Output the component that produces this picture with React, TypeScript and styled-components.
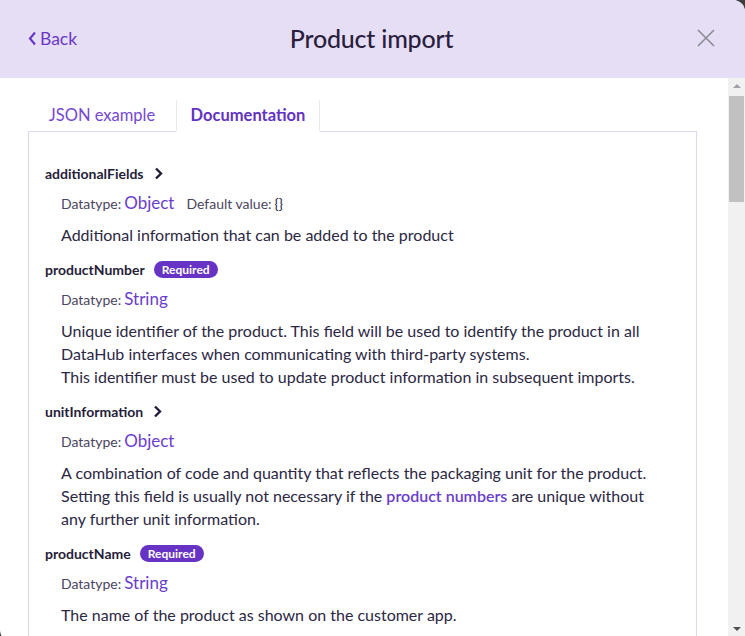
import * as React from 'react';
import styled, { createGlobalStyle } from 'styled-components';

const GlobalStyle = createGlobalStyle`
  html, body {
    margin: 0;
    padding: 0;
    background: #3d3d3f;
    overflow: hidden;
  }
  * {
    box-sizing: border-box;
  }
`

const Link = styled.span`
  color: #6a3dcd;
  font-weight: 600;
`

type Field = {
  name: string;
  required?: boolean;
  expandable?: boolean;
  datatype: string;
  defaultValue?: string;
  description: React.ReactNode[];
};

const fields: Field[] = [
  {
    name: 'additionalFields',
    expandable: true,
    datatype: 'Object',
    defaultValue: '{}',
    description: ['Additional information that can be added to the product']
  },
  {
    name: 'productNumber',
    required: true,
    datatype: 'String',
    description: [
      'Unique identifier of the product. This field will be used to identify the product in all',
      'DataHub interfaces when communicating with third-party systems.',
      'This identifier must be used to update product information in subsequent imports.'
    ]
  },
  {
    name: 'unitInformation',
    expandable: true,
    datatype: 'Object',
    description: [
      'A combination of code and quantity that reflects the packaging unit for the product.',
      <>Setting this field is usually not necessary if the <Link>product numbers</Link> are unique without</>,
      'any further unit information.'
    ]
  },
  {
    name: 'productName',
    required: true,
    datatype: 'String',
    description: ['The name of the product as shown on the customer app.']
  }
]

const ChevronRight = () => (
  <svg width="9" height="13" viewBox="0 0 9 13">
    <polyline points="2,1.5 7,6.5 2,11.5" fill="none" stroke="#241c3a" strokeWidth="2.4" />
  </svg>
)

const ChevronLeft = () => (
  <svg width="9" height="15" viewBox="0 0 9 15">
    <polyline points="7,1.5 2,7.5 7,13.5" fill="none" stroke="#6a38c6" strokeWidth="2.2" />
  </svg>
)

const CloseIcon = () => (
  <svg width="18" height="18" viewBox="0 0 18 18">
    <path d="M1 1 L17 17 M17 1 L1 17" stroke="#8c8a92" strokeWidth="1.6" fill="none" />
  </svg>
)

export default function App() {
  const [tab, setTab] = React.useState('docs')

  return (
    <>
      <GlobalStyle />
      <Modal>
        <Header>
          <BackButton>
            <ChevronLeft />
            Back
          </BackButton>
          <Title>Product import</Title>
          <CloseButton>
            <CloseIcon />
          </CloseButton>
        </Header>
        <Body>
          <ScrollArea>
            <TabRow>
              <Tab $active={tab === 'json'} onClick={() => setTab('json')} $width={148}>JSON example</Tab>
              <Tab $active={tab === 'docs'} onClick={() => setTab('docs')} $width={144}>Documentation</Tab>
              <TabFiller />
            </TabRow>
            <Panel>
              {fields.map((f) => (
                <FieldBlock key={f.name}>
                  <FieldName>
                    {f.name}
                    {f.expandable && <Expand><ChevronRight /></Expand>}
                    {f.required && <Badge>Required</Badge>}
                  </FieldName>
                  <Meta>
                    <MetaLabel>Datatype:</MetaLabel>
                    <MetaValue>{f.datatype}</MetaValue>
                    {f.defaultValue && (
                      <>
                        <MetaLabel $spaced>Default value:</MetaLabel>
                        <DefaultValue>{f.defaultValue}</DefaultValue>
                      </>
                    )}
                  </Meta>
                  <Description>
                    {f.description.map((line, i) => (
                      <Line key={i}>{line}</Line>
                    ))}
                  </Description>
                </FieldBlock>
              ))}
            </Panel>
          </ScrollArea>
          <Scrollbar>
            <ArrowUp />
            <Thumb />
            <TrackSpace />
            <ArrowDown />
          </Scrollbar>
        </Body>
      </Modal>
    </>
  )
}

const Modal = styled.div`
  width: 745px;
  height: 642px;
  background: #ffffff;
  border-radius: 0 12px 0 12px;
  overflow: hidden;
  display: flex;
  flex-direction: column;
  font-family: Lato, "Noto Sans", sans-serif;
`

const Header = styled.div`
  height: 78px;
  flex-shrink: 0;
  background: #e6def5;
  display: grid;
  grid-template-columns: 1fr auto 1fr;
  align-items: center;
  padding: 0 30px 0 28px;
`

const BackButton = styled.div`
  display: flex;
  align-items: center;
  gap: 3px;
  color: #6a38c6;
  font-size: 17.5px;
  cursor: pointer;
  margin-top: -2px;
`

const Title = styled.h1`
  margin: 0;
  font-size: 25px;
  font-weight: 500;
  color: #2a1e3e;
  letter-spacing: -0.2px;
  margin-top: -2px;
`

const CloseButton = styled.div`
  justify-self: end;
  display: flex;
  margin-top: -2px;
  cursor: pointer;
`

const Body = styled.div`
  flex: 1;
  display: flex;
  min-height: 0;
`

const ScrollArea = styled.div`
  flex: 1;
  padding: 22px 31px 0 28px;
  overflow: hidden;
`

const TabRow = styled.div`
  display: flex;
  height: 32px;
`

const Tab = styled.div<{ $active?: boolean; $width: number }>`
  width: ${(p) => p.$width}px;
  display: flex;
  align-items: center;
  justify-content: center;
  font-size: 16.5px;
  padding-bottom: 2px;
  color: ${(p) => (p.$active ? '#6232c2' : '#7549d2')};
  font-weight: ${(p) => (p.$active ? 700 : 400)};
  border-bottom: 1px solid ${(p) => (p.$active ? 'transparent' : '#ddd6f3')};
  border-left: ${(p) => (p.$active ? '1px solid #ebe9ef' : 'none')};
  border-right: ${(p) => (p.$active ? '1px solid #ebe9ef' : 'none')};
  cursor: pointer;
`

const TabFiller = styled.div`
  flex: 1;
  border-bottom: 1px solid #ddd6f3;
`

const Panel = styled.div`
  border: 1px solid #ddd6f3;
  border-top: none;
  padding: 31px 16px 0 16px;
  min-height: 600px;
`

const FieldBlock = styled.div`
  margin-bottom: 13px;
`

const FieldName = styled.div`
  display: flex;
  align-items: center;
  height: 20px;
  font-size: 14px;
  font-weight: 700;
  color: #261d3b;
`

const Expand = styled.span`
  display: inline-flex;
  margin-left: 10px;
  margin-top: 1px;
`

const Badge = styled.span`
  margin-left: 9px;
  height: 17px;
  padding: 0 8px;
  border-radius: 9px;
  background: #6633c4;
  color: #ffffff;
  font-size: 12px;
  font-weight: 700;
  display: inline-flex;
  align-items: center;
`

const Meta = styled.div`
  display: flex;
  align-items: baseline;
  height: 20px;
  line-height: 20px;
  margin-top: 10px;
  padding-left: 16px;
`

const MetaLabel = styled.span<{ $spaced?: boolean }>`
  font-size: 14px;
  color: #4a4560;
  margin-left: ${(p) => (p.$spaced ? '12px' : '0')};
  margin-right: 3px;
`

const MetaValue = styled.span`
  font-size: 17px;
  color: #6a3dcd;
`

const DefaultValue = styled.span`
  font-size: 14px;
  color: #241c3a;
`

const Description = styled.div`
  margin-top: 10px;
  padding-left: 16px;
  font-size: 16px;
  line-height: 23px;
  color: #2c2744;
`

const Line = styled.div`
  white-space: nowrap;
`

const Scrollbar = styled.div`
  width: 17px;
  flex-shrink: 0;
  background: #f1f1f1;
  display: flex;
  flex-direction: column;
  align-items: center;
  padding: 6px 0 5px;
`

const ArrowUp = styled.div`
  width: 0;
  height: 0;
  border-left: 4px solid transparent;
  border-right: 4px solid transparent;
  border-bottom: 4px solid #a39fa8;
  margin-bottom: 8px;
`

const Thumb = styled.div`
  width: 15px;
  height: 106px;
  background: #c1c1c1;
`

const TrackSpace = styled.div`
  flex: 1;
`

const ArrowDown = styled.div`
  width: 0;
  height: 0;
  border-left: 4px solid transparent;
  border-right: 4px solid transparent;
  border-top: 4px solid #505050;
  margin-bottom: 6px;
`
